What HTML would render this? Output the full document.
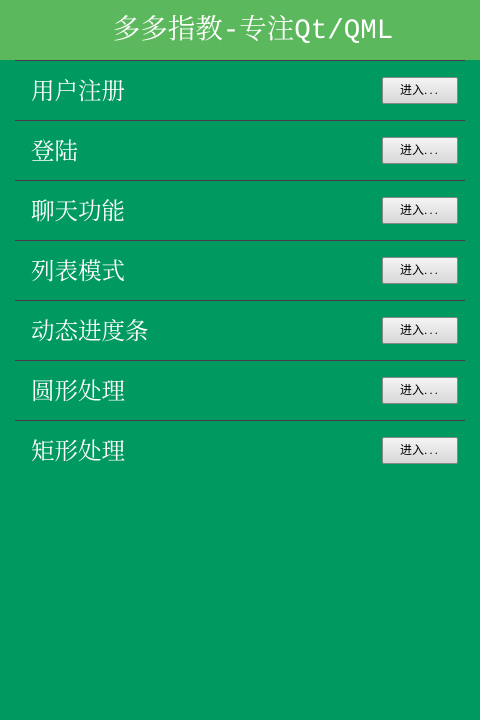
<!DOCTYPE html>
<html><head><meta charset="utf-8"><style>
body{margin:0;width:480px;height:720px;background:#009960;overflow:hidden;font-family:"Liberation Serif","Noto Serif CJK SC",serif}
.hd{height:60px;background:#5cb85c;color:#fff;text-align:center;line-height:64px;font-size:27.5px;font-family:"Liberation Mono","Noto Serif CJK SC",monospace;padding-left:26px;box-sizing:border-box}
.row{position:absolute;left:15px;width:450px;height:60px;border-top:1px solid #4a3a4a}
.row span{position:absolute;left:16px;top:13px;font-size:23.5px;color:#fff;font-family:"Noto Serif CJK SC",serif;line-height:30px}
.row b{position:absolute;left:367px;top:16px;width:74px;height:25px;border:1px solid #888;border-radius:2px;background:linear-gradient(#f4f4f4,#d8d8d8);font-weight:normal;font-size:12px;color:#000;text-align:center;line-height:25px;font-family:"Liberation Sans","Noto Sans CJK SC",sans-serif}
.row b i{font-style:normal;letter-spacing:2px}
</style></head><body>
<div class="hd">多多指教-专注Qt/QML</div>
<div class="row" style="top:60px"><span>用户注册</span><b>进入<i>...</i></b></div>
<div class="row" style="top:120px"><span>登陆</span><b>进入<i>...</i></b></div>
<div class="row" style="top:180px"><span>聊天功能</span><b>进入<i>...</i></b></div>
<div class="row" style="top:240px"><span>列表模式</span><b>进入<i>...</i></b></div>
<div class="row" style="top:300px"><span>动态进度条</span><b>进入<i>...</i></b></div>
<div class="row" style="top:360px"><span>圆形处理</span><b>进入<i>...</i></b></div>
<div class="row" style="top:420px"><span>矩形处理</span><b>进入<i>...</i></b></div>
</body></html>
